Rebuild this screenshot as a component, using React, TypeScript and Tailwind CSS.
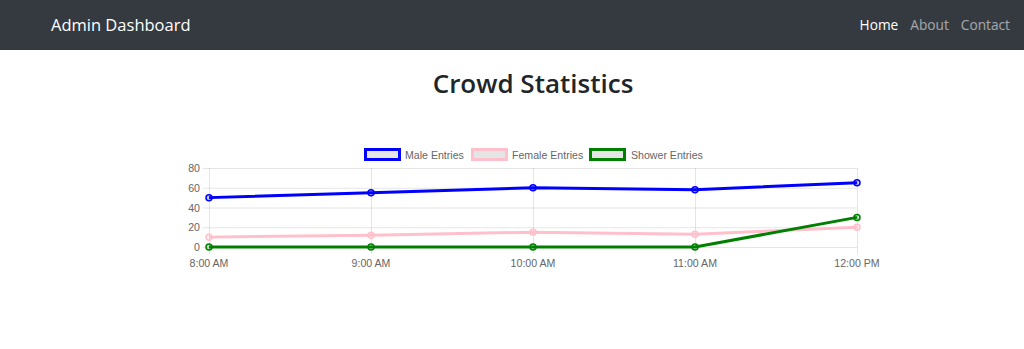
import React from "react";

const labels = ["8:00 AM", "9:00 AM", "10:00 AM", "11:00 AM", "12:00 PM"];

const series = [
  { name: "Male Entries", color: "#0000ff", fill: "rgba(0,0,255,0.2)", data: [50, 55, 60, 58, 65] },
  { name: "Female Entries", color: "#ffc0cb", fill: "rgba(255,192,203,0.2)", data: [10, 12, 15, 13, 20] },
  { name: "Shower Entries", color: "#008000", fill: "rgba(0,128,0,0.2)", data: [0, 0, 0, 0, 30] },
];

const left = 209;
const right = 857;
const top = 168;
const bottom = 247;
const xAt = (i: number) => left + ((right - left) / 4) * i;
const yAt = (v: number) => bottom - ((bottom - top) * v) / 80;

const legend = [
  { box: 364, text: 405 },
  { box: 471, text: 512 },
  { box: 589, text: 631 },
];

const Chart = () => {
  return (
    <svg
      width={720}
      height={140}
      viewBox="152 140 720 140"
      className="overflow-visible"
      style={{ fontFamily: '"Liberation Sans", Arial, sans-serif' }}
    >
      {/* legend */}
      {series.map((s, i) => (
        <g key={s.name}>
          <rect
            x={legend[i].box + 1.5}
            y={149.5}
            width={34}
            height={10}
            fill="rgba(0,0,0,0.1)"
            stroke={s.color}
            strokeWidth={3}
          />
          <text x={legend[i].text} y={159} fontSize={10.6} fill="#666">
            {s.name}
          </text>
        </g>
      ))}

      {/* grid */}
      {[0, 20, 40, 60, 80].map((v) => (
        <g key={v}>
          <line x1={203} x2={right} y1={yAt(v) + 0.5} y2={yAt(v) + 0.5} stroke="rgba(0,0,0,0.1)" />
          <text x={200} y={yAt(v) + 4} fontSize={10.6} fill="#666" textAnchor="end">
            {v}
          </text>
        </g>
      ))}
      {labels.map((l, i) => (
        <g key={l}>
          <line x1={xAt(i) + 0.5} x2={xAt(i) + 0.5} y1={top} y2={bottom + 7} stroke="rgba(0,0,0,0.1)" />
          <text x={xAt(i)} y={267} fontSize={10.6} fill="#666" textAnchor="middle">
            {l}
          </text>
        </g>
      ))}

      {/* lines */}
      {series.map((s) => (
        <g key={s.name}>
          <polyline
            points={s.data.map((v, i) => `${xAt(i)},${yAt(v)}`).join(" ")}
            fill="none"
            stroke={s.color}
            strokeWidth={3}
          />
          {s.data.map((v, i) => (
            <circle key={i} cx={xAt(i)} cy={yAt(v)} r={3} fill={s.fill} stroke={s.color} strokeWidth={1.5} />
          ))}
        </g>
      ))}
    </svg>
  );
};

const App = () => {
  return (
    <div className="min-h-[349px] bg-white" style={{ fontFamily: '"Open Sans", "Noto Sans", sans-serif' }}>
      <nav className="flex h-[50px] items-center justify-between bg-[#343a40] pl-[51px] pr-[14px]">
        <span className="text-[16.5px] text-white">Admin Dashboard</span>
        <div className="flex items-center gap-[12px] text-[13.7px]">
          <span className="text-white">Home</span>
          <span className="text-white/55">About</span>
          <span className="text-white/55">Contact</span>
        </div>
      </nav>
      <h2 className="mt-[14px] pl-[42px] text-center text-[26px] font-semibold leading-[38px] text-[#212529]">
        Crowd Statistics
      </h2>
      <div className="mt-[38px] flex justify-center">
        <Chart />
      </div>
    </div>
  );
};

export default App;
